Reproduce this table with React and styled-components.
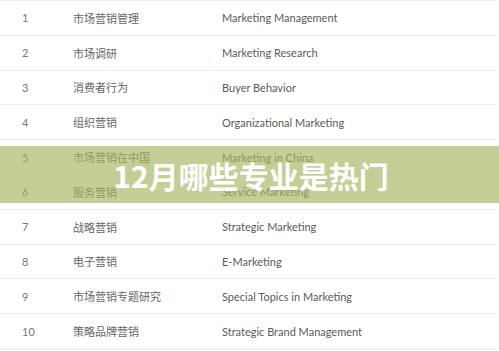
import React from "react";
import styled, { createGlobalStyle } from "styled-components";

const rows = [
  ["1", "市场营销管理", "Marketing Management"],
  ["2", "市场调研", "Marketing Research"],
  ["3", "消费者行为", "Buyer Behavior"],
  ["4", "组织营销", "Organizational Marketing"],
  ["5", "市场营销在中国", "Marketing in China"],
  ["6", "服务营销", "Service Marketing"],
  ["7", "战略营销", "Strategic Marketing"],
  ["8", "电子营销", "E-Marketing"],
  ["9", "市场营销专题研究", "Special Topics in Marketing"],
  ["10", "策略品牌营销", "Strategic Brand Management"],
];

const GlobalStyle = createGlobalStyle`
  html, body {
    margin: 0;
    padding: 0;
    background: #fff;
  }
  body {
    font-family: Lato, "Noto Sans CJK SC", sans-serif;
    overflow: hidden;
  }
`;

const Wrap = styled.div`
  position: relative;
  width: 499px;
  height: 351px;
  overflow: hidden;
`;

const Table = styled.div`
  width: 496px;
  border-bottom: 2px solid #f0f0f0;
`;

const Row = styled.div`
  display: grid;
  grid-template-columns: 73px 149px 1fr;
  align-items: center;
  height: 34.8px;
  box-sizing: border-box;
  border-top: 1.5px solid #efefef;
  font-size: 11px;
  color: #666;
`;

const Num = styled.div`
  padding-left: 22px;
  color: #777;
`;

const Cn = styled.div`
  font-family: "Noto Sans CJK SC", sans-serif;
  font-size: 11px;
  color: #666;
`;

const En = styled.div`
  color: #5a5a5a;
  font-size: 11px;
`;

const Banner = styled.div`
  position: absolute;
  left: 0;
  right: 0;
  top: 146px;
  height: 57px;
  box-sizing: border-box;
  padding-top: 1px;
  display: flex;
  align-items: center;
  justify-content: center;
  background: rgba(165, 182, 95, 0.65);
`;

const Title = styled.h1`
  margin: 0 0 0 3px;
  font-family: "Noto Sans CJK SC", sans-serif;
  font-weight: 700;
  font-size: 30px;
  line-height: 1;
  color: #fff;
`;

export default function App() {
  return (
    <Wrap>
      <GlobalStyle />
      <Table>
        {rows.map(([n, cn, en]) => (
          <Row key={n}>
            <Num>{n}</Num>
            <Cn>{cn}</Cn>
            <En>{en}</En>
          </Row>
        ))}
      </Table>
      <Banner>
        <Title>12月哪些专业是热门</Title>
      </Banner>
    </Wrap>
  );
}
